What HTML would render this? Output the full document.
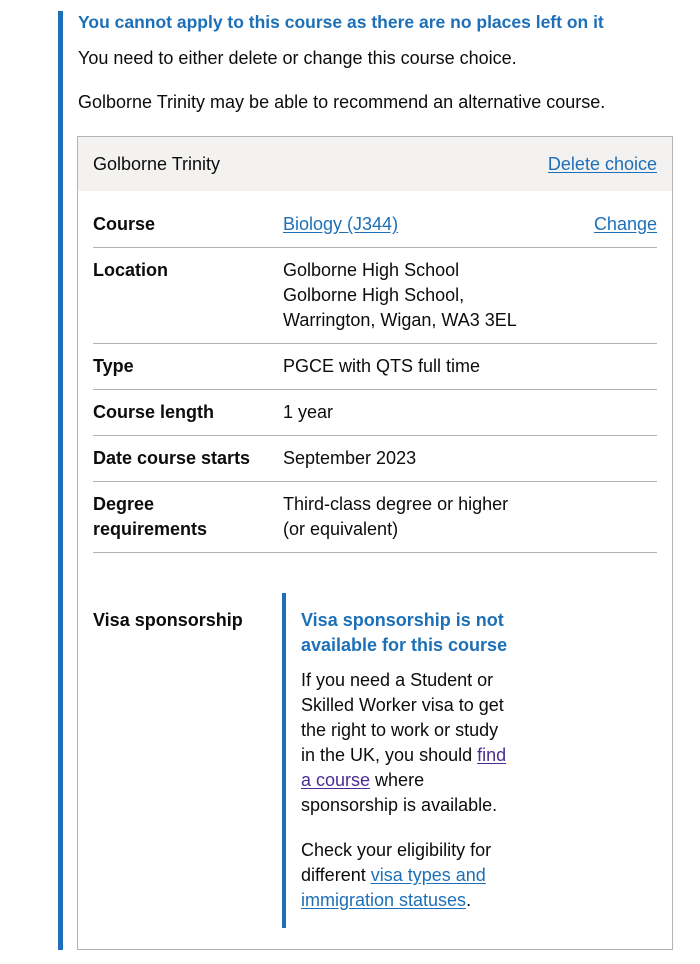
<!DOCTYPE html>
<html><head><meta charset="utf-8"><style>
*{margin:0;padding:0;box-sizing:border-box}
body{width:700px;height:964px;background:#fff;font-family:"Liberation Sans",Arial,sans-serif;color:#0b0c0c;font-size:18px;position:relative;overflow:hidden}
.a{position:absolute;white-space:nowrap;line-height:25px}
a{color:#1d70b8;text-decoration:underline;text-underline-offset:2px}
b{font-weight:bold}
.hr{position:absolute;left:93px;width:564px;height:1px;background:#b1b4b6}
</style></head><body>
<div style="position:absolute;left:58px;top:11px;width:5px;height:939px;background:#1d70b8"></div>
<div class="a" style="left:78px;top:10px;color:#1d70b8;font-weight:bold;font-size:17.5px">You cannot apply to this course as there are no places left on it</div>
<div class="a" style="left:78px;top:46px">You need to either delete or change this course choice.</div>
<div class="a" style="left:78px;top:90px">Golborne Trinity may be able to recommend an alternative course.</div>
<div style="position:absolute;left:77px;top:136px;width:596px;height:814px;border:1px solid #b1b4b6"></div>
<div style="position:absolute;left:78px;top:137px;width:594px;height:54px;background:#f3f2f1"></div>
<div class="a" style="left:93px;top:152px">Golborne Trinity</div>
<div class="a" style="right:43px;top:152px"><a href="#">Delete choice</a></div>
<div class="a" style="left:93px;top:212px"><b>Course</b></div>
<div class="a" style="left:283px;top:212px"><a href="#">Biology (J344)</a></div>
<div class="a" style="right:43px;top:212px"><a href="#">Change</a></div>
<div class="hr" style="top:247px"></div>
<div class="a" style="left:93px;top:258px"><b>Location</b></div>
<div class="a" style="left:283px;top:258px">Golborne High School<br>Golborne High School,<br>Warrington, Wigan, WA3 3EL</div>
<div class="hr" style="top:343px"></div>
<div class="a" style="left:93px;top:354px"><b>Type</b></div>
<div class="a" style="left:283px;top:354px">PGCE with QTS full time</div>
<div class="hr" style="top:389px"></div>
<div class="a" style="left:93px;top:400px"><b>Course length</b></div>
<div class="a" style="left:283px;top:400px">1 year</div>
<div class="hr" style="top:435px"></div>
<div class="a" style="left:93px;top:446px"><b>Date course starts</b></div>
<div class="a" style="left:283px;top:446px">September 2023</div>
<div class="hr" style="top:481px"></div>
<div class="a" style="left:93px;top:492px"><b>Degree<br>requirements</b></div>
<div class="a" style="left:283px;top:492px">Third-class degree or higher<br>(or equivalent)</div>
<div class="hr" style="top:552px"></div>
<div class="a" style="left:93px;top:608px"><b>Visa sponsorship</b></div>
<div style="position:absolute;left:282px;top:593px;width:4px;height:335px;background:#1d70b8"></div>
<div class="a" style="left:301px;top:608px;color:#1d70b8;font-weight:bold">Visa sponsorship is not<br>available for this course</div>
<div class="a" style="left:301px;top:668px">If you need a Student or<br>Skilled Worker visa to get<br>the right to work or study<br>in the UK, you should <a href="#" style="color:#4c2c92">find</a><br><a href="#" style="color:#4c2c92">a course</a> where<br>sponsorship is available.</div>
<div class="a" style="left:301px;top:838px">Check your eligibility for<br>different <a href="#">visa types and</a><br><a href="#">immigration statuses</a>.</div>
</body></html>
